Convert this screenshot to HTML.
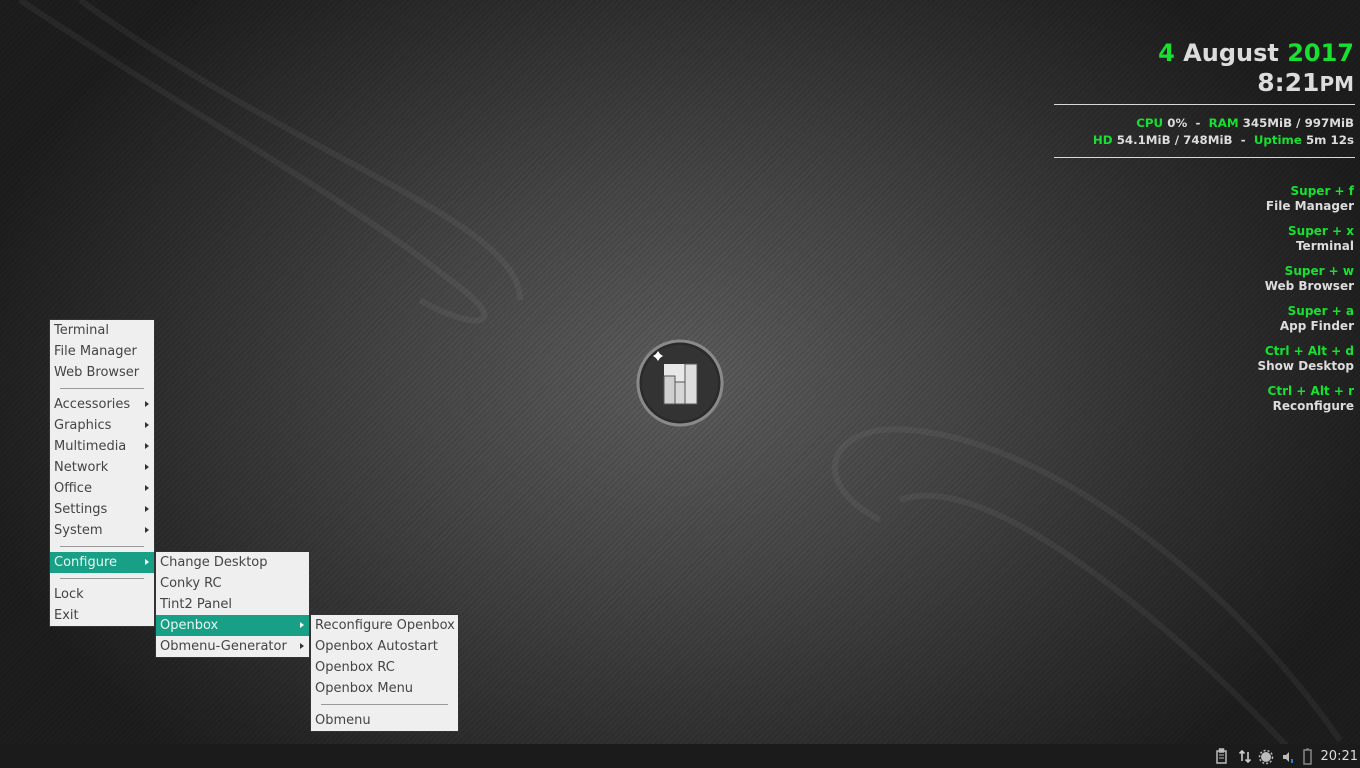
<!DOCTYPE html>
<html><head><meta charset="utf-8"><style>
*{margin:0;padding:0;box-sizing:border-box}
body{width:1360px;height:768px;overflow:hidden;position:relative;font-family:"DejaVu Sans","Liberation Sans",sans-serif;
background:radial-gradient(ellipse 720px 520px at 680px 380px,#5e5e5e 0%,#464646 40%,#2e2e2e 75%,#1e1e1e 100%);}
.stripes{position:absolute;inset:0;background:repeating-linear-gradient(135deg,rgba(0,0,0,0.10) 0 2px,rgba(255,255,255,0) 2px 4px);}
.g{color:#18e030}.w{color:#dcdcdc}
.c{position:absolute;right:6px;text-align:right;font-weight:bold;white-space:nowrap}
.hr{position:absolute;left:1054px;width:301px;height:1px;background:#d8d8d8}
.menu{position:absolute;background:#efefef;border:1px solid #333;font-size:13px;color:#444}
.it{position:absolute;left:0;right:0;height:21px;line-height:22px;padding-left:4px;white-space:nowrap}
.it.h{background:#17a085;color:#eaf7f2}
.ar{position:absolute;right:5px;top:7px;width:0;height:0;border-left:4px solid #333;border-top:3.5px solid transparent;border-bottom:3.5px solid transparent}
.h .ar{border-left-color:#fff}
.sep{position:absolute;height:1px;background:#999}
.bar{position:absolute;left:0;right:0;top:744px;height:24px;background:#1b1b1b}
.sc{font-size:12px;line-height:15px}
</style></head><body>
<div class="stripes"></div>
<svg style="position:absolute;left:0;top:0" width="1360" height="768">
<g fill="none" stroke="rgba(255,255,255,0.05)" stroke-width="6">
<path d="M20 0 C200 120 350 200 450 280 C520 330 470 330 420 300"/>
<path d="M80 0 C300 160 520 220 520 300"/>
<path d="M1340 740 C1200 540 1000 420 880 430 C820 440 820 490 880 520"/>
<path d="M1300 760 C1150 600 980 470 900 500"/>
</g>
<circle cx="680" cy="383" r="42" fill="#2a2a2a" stroke="#8a8a8a" stroke-width="3"/>
<circle cx="680" cy="383" r="38" fill="#333"/>
<rect x="664" y="364" width="33" height="40" fill="#e8e8e8"/>
<rect x="664" y="376" width="11" height="28" fill="#cfcfcf" stroke="#555" stroke-width="1"/>
<rect x="675" y="382" width="10" height="22" fill="#d6d6d6" stroke="#555" stroke-width="1"/>
<rect x="685" y="364" width="12" height="40" fill="#dedede" stroke="#555" stroke-width="1"/>
<path d="M660 358 l3 -2 l-3 -2 l-2 -3 l-2 3 l-3 2 l3 2 l2 3z" fill="#fff"/>
</svg>

<div class="c" style="top:39px;font-size:24px"><span class="g">4</span> <span class="w">August</span> <span class="g">2017</span></div>
<div class="c w" style="top:68px;font-size:25px;color:#dcdcdc">8:21<span style="font-size:20px">PM</span></div>
<div class="hr" style="top:104px"></div>
<div class="c" style="top:116px;font-size:11.8px"><span class="g">CPU</span> <span class="w">0%&nbsp; - &nbsp;</span><span class="g">RAM</span> <span class="w">345MiB / 997MiB</span></div>
<div class="c" style="top:133px;font-size:11.8px"><span class="g">HD</span> <span class="w">54.1MiB / 748MiB&nbsp; - &nbsp;</span><span class="g">Uptime</span> <span class="w">5m 12s</span></div>
<div class="hr" style="top:157px"></div>

<div class="c sc" style="top:184px"><span class="g">Super + f</span><br><span class="w">File Manager</span></div>
<div class="c sc" style="top:224px"><span class="g">Super + x</span><br><span class="w">Terminal</span></div>
<div class="c sc" style="top:264px"><span class="g">Super + w</span><br><span class="w">Web Browser</span></div>
<div class="c sc" style="top:304px"><span class="g">Super + a</span><br><span class="w">App Finder</span></div>
<div class="c sc" style="top:344px"><span class="g">Ctrl + Alt + d</span><br><span class="w">Show Desktop</span></div>
<div class="c sc" style="top:384px"><span class="g">Ctrl + Alt + r</span><br><span class="w">Reconfigure</span></div>

<div class="menu" style="left:49px;top:319px;width:106px;height:308px">
<div class="it" style="top:0">Terminal</div>
<div class="it" style="top:21px">File Manager</div>
<div class="it" style="top:42px">Web Browser</div>
<div class="sep" style="left:10px;right:10px;top:68px"></div>
<div class="it" style="top:74px">Accessories<i class="ar"></i></div>
<div class="it" style="top:95px">Graphics<i class="ar"></i></div>
<div class="it" style="top:116px">Multimedia<i class="ar"></i></div>
<div class="it" style="top:137px">Network<i class="ar"></i></div>
<div class="it" style="top:158px">Office<i class="ar"></i></div>
<div class="it" style="top:179px">Settings<i class="ar"></i></div>
<div class="it" style="top:200px">System<i class="ar"></i></div>
<div class="sep" style="left:10px;right:10px;top:226px"></div>
<div class="it h" style="top:232px">Configure<i class="ar"></i></div>
<div class="sep" style="left:10px;right:10px;top:258px"></div>
<div class="it" style="top:264px">Lock</div>
<div class="it" style="top:285px">Exit</div>
</div>

<div class="menu" style="left:155px;top:551px;width:155px;height:107px">
<div class="it" style="top:0">Change Desktop</div>
<div class="it" style="top:21px">Conky RC</div>
<div class="it" style="top:42px">Tint2 Panel</div>
<div class="it h" style="top:63px">Openbox<i class="ar"></i></div>
<div class="it" style="top:84px">Obmenu-Generator<i class="ar"></i></div>
</div>

<div class="menu" style="left:310px;top:614px;width:149px;height:118px">
<div class="it" style="top:0">Reconfigure Openbox</div>
<div class="it" style="top:21px">Openbox Autostart</div>
<div class="it" style="top:42px">Openbox RC</div>
<div class="it" style="top:63px">Openbox Menu</div>
<div class="sep" style="left:10px;right:10px;top:89px"></div>
<div class="it" style="top:95px">Obmenu</div>
</div>

<div class="bar">
<svg style="position:absolute;left:1210px;top:0" width="110" height="24">
<g fill="none" stroke="#bbb" stroke-width="1.5">
<rect x="7" y="7" width="9" height="12"/><rect x="9.5" y="5" width="4" height="3" fill="#bbb"/>
</g>
<path d="M9 11h5M9 14h5" stroke="#bbb"/>
<path d="M32 7v10M29.5 9.5L32 7l2.5 2.5M38 8v10M35.5 15.5L38 18l2.5-2.5" stroke="#ccc" stroke-width="1.6" fill="none"/>
<circle cx="56" cy="13" r="5" fill="#bbb"/><circle cx="56" cy="13" r="6.5" fill="none" stroke="#bbb" stroke-width="1.5" stroke-dasharray="2 2"/>
<path d="M73 11h3l3-3v10l-3-3h-3z" fill="#bbb"/><rect x="81" y="15" width="2" height="4" fill="#2a7fd4"/>
<rect x="94" y="6" width="7" height="14" fill="none" stroke="#888" stroke-width="1.5"/><rect x="96" y="4.5" width="3" height="2" fill="#888"/>
</svg>
<div style="position:absolute;right:2px;top:5px;font-size:13px;color:#dcdcdc">20:21</div>
</div>
</body></html>
